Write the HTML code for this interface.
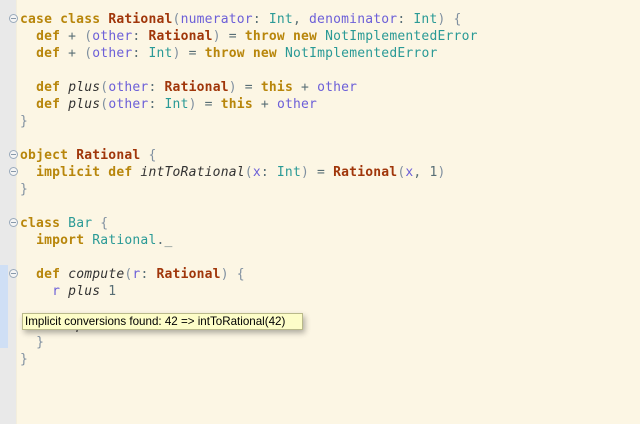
<!DOCTYPE html>
<html><head><style>
body{margin:0;width:640px;height:424px;background:#fcf6e4;position:relative;overflow:hidden}
.g{position:absolute;left:0;top:0;width:16px;height:424px;background:#e9e9e9;border-right:1px solid #f3eedd}
.hl{position:absolute;left:0;top:265px;width:8px;height:83px;background:#cfdff5}
pre{position:absolute;left:20px;top:11px;margin:0;font:13px/17px "DejaVu Sans Mono",monospace;letter-spacing:0.2px;color:#586e75}
.k{color:#b8860b;font-weight:bold}
.c{color:#a0360a;font-weight:bold}
.p{color:#6c5fd8}
.t{color:#2a9a96}
.i{font-style:italic;color:#333}
.b{color:#8090a0}
.f{position:absolute;left:9px;width:7px;height:7px;border:1px solid #9aaabb;border-radius:50%;background:#f4f4f4}
.f:after{content:"";position:absolute;left:1px;top:3px;width:5px;height:1px;background:#8899aa}
.tip{position:absolute;left:22px;top:313px;width:281px;height:17px;background:#fdfdc8;border:1px solid #b9b98a;box-shadow:2px 3px 6px rgba(0,0,0,.3);font:11.6px/16px "Liberation Sans",sans-serif;color:#000;padding-left:2px;box-sizing:border-box;white-space:nowrap}
</style></head><body>
<div class="g"></div><div class="hl"></div>
<div class="f" style="top:14px"></div>
<div class="f" style="top:150px"></div>
<div class="f" style="top:167px"></div>
<div class="f" style="top:218px"></div>
<div class="f" style="top:269px"></div>
<pre><span class="k">case class</span> <span class="c">Rational</span><span class="b">(</span><span class="p">numerator</span>: <span class="t">Int</span>, <span class="p">denominator</span>: <span class="t">Int</span><span class="b">)</span> <span class="b">{</span>
  <span class="k">def</span> + <span class="b">(</span><span class="p">other</span>: <span class="c">Rational</span><span class="b">)</span> = <span class="k">throw new</span> <span class="t">NotImplementedError</span>
  <span class="k">def</span> + <span class="b">(</span><span class="p">other</span>: <span class="t">Int</span><span class="b">)</span> = <span class="k">throw new</span> <span class="t">NotImplementedError</span>

  <span class="k">def</span> <span class="i">plus</span><span class="b">(</span><span class="p">other</span>: <span class="c">Rational</span><span class="b">)</span> = <span class="k">this</span> + <span class="p">other</span>
  <span class="k">def</span> <span class="i">plus</span><span class="b">(</span><span class="p">other</span>: <span class="t">Int</span><span class="b">)</span> = <span class="k">this</span> + <span class="p">other</span>
<span class="b">}</span>

<span class="k">object</span> <span class="c">Rational</span> <span class="b">{</span>
  <span class="k">implicit def</span> <span class="i">intToRational</span><span class="b">(</span><span class="p">x</span>: <span class="t">Int</span><span class="b">)</span> = <span class="c">Rational</span><span class="b">(</span><span class="p">x</span>, 1<span class="b">)</span>
<span class="b">}</span>

<span class="k">class</span> <span class="t">Bar</span> <span class="b">{</span>
  <span class="k">import</span> <span class="t">Rational</span>._

  <span class="k">def</span> <span class="i">compute</span><span class="b">(</span><span class="p">r</span>: <span class="c">Rational</span><span class="b">)</span> <span class="b">{</span>
    <span class="p">r</span> <span class="i">plus</span> 1

    42 <span class="i">plus</span> 1
  <span class="b">}</span>
<span class="b">}</span></pre>
<div class="tip">Implicit conversions found: 42 =&gt; intToRational(42)</div>
</body></html>
